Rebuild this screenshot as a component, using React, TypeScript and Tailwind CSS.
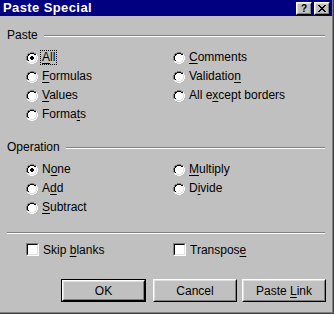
import React from "react";

const RADIO_MAP = [
    "....gggg....",
    "..ggkkkkgg..",
    ".gkkwwwwkkw.",
    ".gkwwwwwwlw.",
    "gkwwwwwwwwlw",
    "gkwwwwwwwwlw",
    "gkwwwwwwwwlw",
    "gkwwwwwwwwlw",
    ".gkwwwwwwlw.",
    ".wllwwwwllw.",
    "..wwllllww..",
    "....wwww....",
];

const DOT_MAP = [".kk.", "kkkk", "kkkk", ".kk."];

const COLORS: Record<string, string> = {
    g: "#808080",
    k: "#000000",
    w: "#ffffff",
    l: "#dfdfdf",
};

const Radio = ({ checked }: { checked?: boolean }) => (
    <svg width="12" height="12" viewBox="0 0 12 12" shapeRendering="crispEdges" className="shrink-0">
        {RADIO_MAP.map((row, y) =>
            row.split("").map((c, x) =>
                c === "." ? null : <rect key={`${x}-${y}`} x={x} y={y} width="1" height="1" fill={COLORS[c]} />
            )
        )}
        {checked &&
            DOT_MAP.map((row, y) =>
                row.split("").map((c, x) =>
                    c === "." ? null : <rect key={`d${x}-${y}`} x={x + 4} y={y + 4} width="1" height="1" fill="#000" />
                )
            )}
    </svg>
);

const Checkbox = () => (
    <div className="w-[13px] h-[13px] shrink-0 border border-t-[#808080] border-l-[#808080] border-b-white border-r-white">
        <div className="w-full h-full bg-white border border-t-black border-l-black border-b-[#dfdfdf] border-r-[#dfdfdf]"></div>
    </div>
);

// label with one underlined access key
const Label = ({ text, k }: { text: string; k: number }) => (
    <span className="whitespace-pre">
        {text.slice(0, k)}
        <span className="underline underline-offset-[2px]">{text[k]}</span>
        {text.slice(k + 1)}
    </span>
);

const RadioRow = ({ text, k, checked, focus }: { text: string; k: number; checked?: boolean; focus?: boolean }) => (
    <div className="h-[19px] flex items-center gap-[4px]">
        <Radio checked={checked} />
        <span className={focus ? "border border-dotted border-black px-[1px] -ml-[2px] leading-[13px]" : "leading-[13px]"}>
            <Label text={text} k={k} />
        </span>
    </div>
);

const GroupHeader = ({ text }: { text: string }) => (
    <div className="h-[14px] flex items-center pl-[7px] pr-[7px] gap-[6px]">
        <span className="leading-[14px]">{text}</span>
        <div className="flex-1 border-t border-t-[#808080] border-b border-b-white mt-[1px]"></div>
    </div>
);

const Button = ({ children, isDefault, w }: { children: React.ReactNode; isDefault?: boolean; w: string }) => {
    const inner = (
        <div className="h-full border border-t-white border-l-white border-b-black border-r-black">
            <div className="h-full flex items-center justify-center border border-t-[#dfdfdf] border-l-[#dfdfdf] border-b-[#808080] border-r-[#808080]">
                {children}
            </div>
        </div>
    );
    return (
        <div className={`${w} h-[23px]`}>
            {isDefault ? <div className="h-full border border-black">{inner}</div> : inner}
        </div>
    );
};

const TitleButton = ({ children }: { children: React.ReactNode }) => (
    <div className="w-4 h-[13px] bg-[#c0c0c0] border border-t-white border-l-white border-b-black border-r-black">
        <div className="w-full h-full flex items-center justify-center border border-t-[#dfdfdf] border-l-[#dfdfdf] border-b-[#808080] border-r-[#808080]">
            {children}
        </div>
    </div>
);

export default function App() {
    return (
        <div className="w-[334px] h-[314px] bg-[#c0c0c0] text-black text-[12px] overflow-hidden"
            style={{ fontFamily: '"Liberation Sans", Arial, sans-serif' }}>
            <div className="w-full h-full border-r border-b border-r-[#404040] border-b-[#404040]">
                <div className="w-full h-full border-r border-b border-r-[#808080] border-b-[#808080] flex flex-col">

                    {/* Title bar */}
                    <div className="h-4 bg-[#000080] flex items-center pl-[3px] pr-[2px]">
                        <span className="text-white font-bold text-[13px] tracking-[0.4px] leading-4">Paste Special</span>
                        <div className="ml-auto flex gap-[2px] mt-[1px]">
                            <TitleButton>
                                <span className="text-[10px] font-bold leading-[10px]">?</span>
                            </TitleButton>
                            <TitleButton>
                                <svg width="8" height="7" viewBox="0 0 8 7" shapeRendering="crispEdges">
                                    <path d="M0 0h2v1h-2zM6 0h2v1h-2zM1 1h2v1h-2zM5 1h2v1h-2zM2 2h4v1h-4zM3 3h2v1h-2zM2 4h4v1h-4zM1 5h2v1h-2zM5 5h2v1h-2zM0 6h2v1h-2zM6 6h2v1h-2z" fill="#000" />
                                </svg>
                            </TitleButton>
                        </div>
                    </div>

                    {/* Paste group */}
                    <div className="mt-3">
                        <GroupHeader text="Paste" />
                    </div>
                    <div className="mt-[6px] pl-[26px] grid grid-cols-[147px_1fr]">
                        <div className="flex flex-col">
                            <RadioRow text="All" k={0} checked focus />
                            <RadioRow text="Formulas" k={0} />
                            <RadioRow text="Values" k={0} />
                            <RadioRow text="Formats" k={5} />
                        </div>
                        <div className="flex flex-col">
                            <RadioRow text="Comments" k={0} />
                            <RadioRow text="Validation" k={9} />
                            <RadioRow text="All except borders" k={5} />
                        </div>
                    </div>

                    {/* Operation group */}
                    <div className="mt-4">
                        <GroupHeader text="Operation" />
                    </div>
                    <div className="mt-[6px] pl-[26px] grid grid-cols-[147px_1fr]">
                        <div className="flex flex-col">
                            <RadioRow text="None" k={1} checked />
                            <RadioRow text="Add" k={1} />
                            <RadioRow text="Subtract" k={0} />
                        </div>
                        <div className="flex flex-col">
                            <RadioRow text="Multiply" k={0} />
                            <RadioRow text="Divide" k={1} />
                        </div>
                    </div>

                    {/* separator */}
                    <div className="mt-[15px] mx-[7px] border-t border-t-[#808080] border-b border-b-white"></div>

                    <div className="mt-[6px] pl-[26px] grid grid-cols-[147px_1fr]">
                        <div className="h-[19px] flex items-center gap-[4px]">
                            <Checkbox />
                            <Label text="Skip blanks" k={5} />
                        </div>
                        <div className="h-[19px] flex items-center gap-[4px]">
                            <Checkbox />
                            <Label text="Transpose" k={8} />
                        </div>
                    </div>

                    {/* Buttons */}
                    <div className="mt-5 pl-[61px] flex">
                        <Button w="w-[85px]" isDefault>OK</Button>
                        <div className="w-[7px]"></div>
                        <Button w="w-[84px]">Cancel</Button>
                        <div className="w-[5px]"></div>
                        <Button w="w-[84px]">
                            <Label text="Paste Link" k={6} />
                        </Button>
                    </div>
                </div>
            </div>
        </div>
    );
}
